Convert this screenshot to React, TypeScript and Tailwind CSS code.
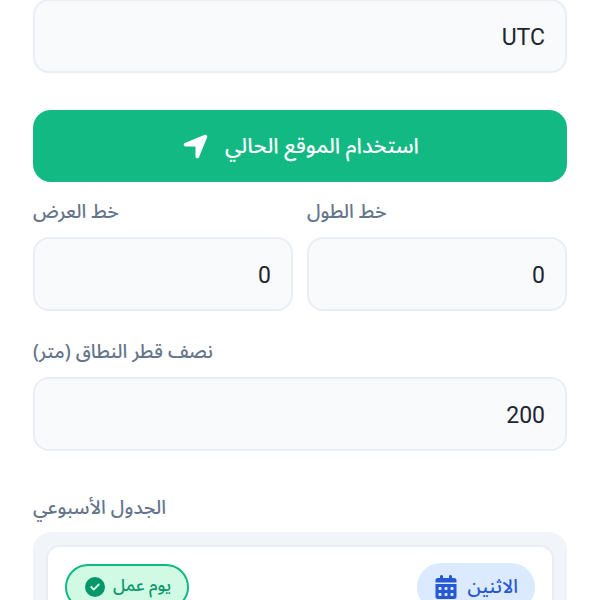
import React from "react";
import { FaLocationArrow, FaCalendarDays, FaCircleCheck } from "react-icons/fa6";

const Field = ({ value, className = "" }: { value: string; className?: string }) => (
  <div className={"h-[74px] pt-[4px] flex items-center justify-start px-[20px] bg-[#f8fafc] border-2 border-[#e9eef4] rounded-[16px] text-[23px] text-[#1e2530] font-['Roboto',sans-serif] " + className}>
    {value}
  </div>
);

const Label = ({ children }: { children: React.ReactNode }) => (
  <div className="h-[24px] leading-[24px] text-[19.2px] font-medium text-[#64748b] text-left">{children}</div>
);

export default function App() {
  return (
    <div dir="rtl" className="w-[600px] h-[600px] overflow-hidden bg-white font-['Noto_Sans_Arabic','Noto_Sans','DejaVu_Sans',sans-serif]">
      <div className="px-[33px] -mt-[1px] flex flex-col">
        <Field value="UTC" />
        <button className="mt-[37px] h-[72px] rounded-[18px] bg-[#13b983] text-white text-[21.5px] font-medium flex items-center justify-center gap-[15px]">
          <span>استخدام الموقع الحالي</span>
          <FaLocationArrow className="w-[29px] h-[29px]" />
        </button>
        <div className="mt-[18px] grid grid-cols-2 gap-[14px]">
          <div>
            <Label>خط الطول</Label>
            <Field value="0" className="mt-[13px]" />
          </div>
          <div>
            <Label>خط العرض</Label>
            <Field value="0" className="mt-[13px]" />
          </div>
        </div>
        <div className="mt-[29px]">
          <Label>نصف قطر النطاق (متر)</Label>
          <Field value="200" className="mt-[13px]" />
        </div>
        <div className="mt-[45px]">
          <Label>الجدول الأسبوعي</Label>
          <div className="mt-[12px] bg-[#f1f5f9] rounded-[18px] p-[13px]">
            <div className="bg-white border-2 border-[#e9eef4] rounded-[14px] px-[17px] py-[16px] flex justify-between h-[120px] items-start">
              <div className="h-[48px] pr-[17px] pl-[17px] rounded-full bg-[#dbeafe] text-[#2557d6] text-[19px] font-medium flex items-center gap-[10px]">
                <span>الاثنين</span>
                <FaCalendarDays className="w-[24px] h-[24px]" />
              </div>
              <div className="mt-[1px] h-[46px] pr-[16px] pl-[18px] rounded-full bg-[#d1fae5] border-2 border-[#10b981] text-[#059669] text-[17px] font-medium flex items-center gap-[8px]">
                <span>يوم عمل</span>
                <FaCircleCheck className="w-[20px] h-[20px]" />
              </div>
            </div>
          </div>
        </div>
      </div>
    </div>
  );
}
